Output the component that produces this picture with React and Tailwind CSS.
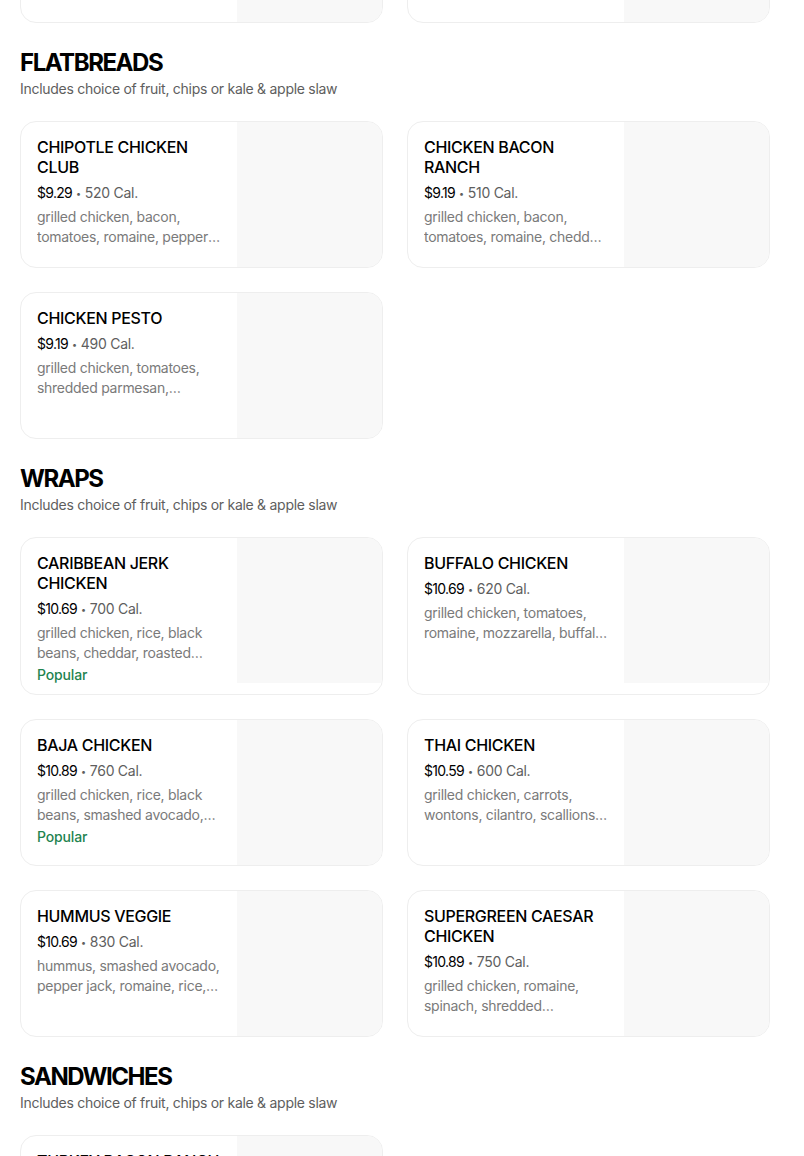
import React from "react";

const sections = [
  {
    title: "FLATBREADS",
    items: [
      { name: "CHIPOTLE CHICKEN CLUB", price: "$9.29", cal: "520 Cal.", desc: "grilled chicken, bacon, tomatoes, romaine, pepper jack, chipotle mayo" },
      { name: "CHICKEN BACON RANCH", price: "$9.19", cal: "510 Cal.", desc: "grilled chicken, bacon, tomatoes, romaine, cheddar, ranch" },
      { name: "CHICKEN PESTO", price: "$9.19", cal: "490 Cal.", desc: "grilled chicken, tomatoes, shredded parmesan, mozzarella, pesto" },
    ],
  },
  {
    title: "WRAPS",
    items: [
      { name: "CARIBBEAN JERK CHICKEN", price: "$10.69", cal: "700 Cal.", desc: "grilled chicken, rice, black beans, cheddar, roasted corn salsa", popular: true },
      { name: "BUFFALO CHICKEN", price: "$10.69", cal: "620 Cal.", desc: "grilled chicken, tomatoes, romaine, mozzarella, buffalo sauce" },
      { name: "BAJA CHICKEN", price: "$10.89", cal: "760 Cal.", desc: "grilled chicken, rice, black beans, smashed avocado, pico de gallo", popular: true },
      { name: "THAI CHICKEN", price: "$10.59", cal: "600 Cal.", desc: "grilled chicken, carrots, wontons, cilantro, scallions, peanut sauce" },
      { name: "HUMMUS VEGGIE", price: "$10.69", cal: "830 Cal.", desc: "hummus, smashed avocado, pepper jack, romaine, rice, tomatoes" },
      { name: "SUPERGREEN CAESAR CHICKEN", price: "$10.89", cal: "750 Cal.", desc: "grilled chicken, romaine, spinach, shredded parmesan, caesar" },
    ],
  },
  {
    title: "SANDWICHES",
    items: [
      { name: "TURKEY BACON RANCH", price: "$9.79", cal: "640 Cal.", desc: "turkey, bacon, tomatoes, romaine, cheddar, ranch" },
    ],
  },
];

function Card({ item }) {
  return (
    <div className="flex rounded-2xl border border-[#eeeeee] bg-white overflow-hidden">
      <div className="flex-1 min-w-0 pl-4 pr-4 pt-[15px] pb-[9px]">
        <div className="text-[16px] leading-5 font-medium tracking-[-0.02em] text-black">{item.name}</div>
        <div className="mt-[6px] text-[14px] leading-5 tracking-[-0.02em] text-[#5e5e5e]">
          <span className="text-black tracking-[-0.05em]">{item.price}</span>
          <span className="mx-[4px] text-[9px] align-[1px]">•</span>
          <span>{item.cal}</span>
        </div>
        <div className="mt-[3px] text-[14px] leading-5 tracking-[-0.02em] text-[#7a7a7a] line-clamp-2">{item.desc}</div>
        {item.popular && (
          <div className="mt-[2px] text-[14px] leading-5 font-medium tracking-[-0.01em] text-[#1f8450]">Popular</div>
        )}
      </div>
      <div className="w-[145px] h-[145px] shrink-0 bg-[#f8f8f8]" />
    </div>
  );
}

export default function App() {
  return (
    <div className="bg-white min-h-screen overflow-hidden" style={{ fontFamily: "Inter, 'Noto Sans', sans-serif" }}>
      <div className="w-[750px] ml-5">
        <div className="grid grid-cols-2 gap-x-6 -mt-[124px]">
          <Card item={{ name: "CHICKEN SHAWARMA", price: "$9.19", cal: "480 Cal.", desc: "grilled chicken, tomatoes, cucumbers" }} />
          <Card item={{ name: "BBQ CHICKEN", price: "$9.19", cal: "500 Cal.", desc: "grilled chicken, red onions, bbq sauce" }} />
        </div>
        {sections.map((s) => (
          <div key={s.title} className="mt-6">
            <h2 className="text-[24px] leading-8 font-bold tracking-[-0.06em] text-black">{s.title}</h2>
            <div className="text-[14px] leading-5 tracking-[-0.02em] text-[#5e5e5e]">Includes choice of fruit, chips or kale &amp; apple slaw</div>
            <div className="grid grid-cols-2 gap-x-6 gap-y-6 mt-[22px]">
              {s.items.map((it) => (
                <Card key={it.name} item={it} />
              ))}
            </div>
          </div>
        ))}
      </div>
    </div>
  );
}
